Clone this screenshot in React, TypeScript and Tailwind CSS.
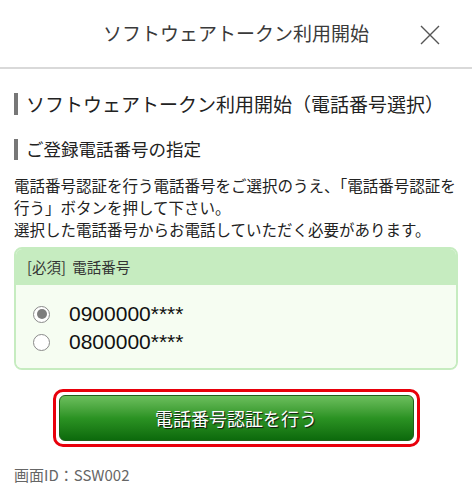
import React from 'react'

const jp = "font-['Noto_Sans_CJK_JP','Noto_Sans',sans-serif]"

function Radio({ checked }: { checked: boolean }) {
  return (
    <span className="flex h-[17px] w-[17px] items-center justify-center rounded-full border border-[#8a8a8a] bg-white">
      {checked && <span className="h-[10px] w-[10px] rounded-full bg-[#7d7d7d]" />}
    </span>
  )
}

export default function App() {
  const phones = [
    { num: '0900000****', checked: true },
    { num: '0800000****', checked: false },
  ]

  return (
    <div className={`min-h-[501px] w-[472px] bg-white text-[#222] ${jp}`}>
      {/* header */}
      <header className="relative flex h-[69px] items-center justify-center border-b-2 border-[#d9d9d9]">
        <h1 className="pb-[1px] text-[19px] leading-[24px] text-[#3a3a3a]">ソフトウェアトークン利用開始</h1>
        <button className="absolute right-[32px] top-[25px]" aria-label="close">
          <svg width="20" height="20" viewBox="0 0 20 20">
            <path d="M1 1L19 19M19 1L1 19" stroke="#555" strokeWidth="1.4" />
          </svg>
        </button>
      </header>

      <main className="px-[14px]">
        <h2 className="mt-[23px] flex items-center gap-[8px] text-[19px] leading-[24px]">
          <span className="h-[22px] w-[4px] bg-[#777]" />
          ソフトウェアトークン利用開始（電話番号選択）
        </h2>

        <h3 className="mt-[21px] flex items-center gap-[8px] text-[17.5px] leading-[24px]">
          <span className="h-[21px] w-[4px] bg-[#777]" />
          ご登録電話番号の指定
        </h3>

        <p className="mt-[13px] text-[15.5px] leading-[22px] text-[#222]">
          電話番号認証を行う電話番号をご選択のうえ、「電話番号認証を
          <br />
          行う」ボタンを押して下さい。
          <br />
          選択した電話番号からお電話していただく必要があります。
        </p>

        <section className="mt-[7px] overflow-hidden rounded-[8px] border-2 border-[#c6ecc0]">
          <div className="flex h-[36px] items-center bg-[#c6ecc0] pl-[11px] text-[14.5px] text-[#333]">
            [必須]&nbsp;&nbsp;電話番号
          </div>
          <div className="flex flex-col bg-[#f6fdf2] pb-[12px] pl-[17px] pt-[15px]">
            {phones.map((p) => (
              <label key={p.num} className="flex h-[28px] items-center gap-[19px]">
                <Radio checked={p.checked} />
                <span className="font-['Liberation_Sans',sans-serif] text-[21px] leading-[28px] text-[#111]">
                  {p.num}
                </span>
              </label>
            ))}
          </div>
        </section>

        <div className="mx-auto mt-[19px] w-[367px] rounded-[10px] border-[3px] border-[#e8000b] bg-white p-[3px]">
          <button className="flex h-[46px] w-full items-center justify-center rounded-[6px] border border-[#1f5f1a] bg-gradient-to-b from-[#6cbf5d] via-[#2b9323] to-[#0c6a0c] text-[18px] text-white [text-shadow:1px_1px_1px_#111]">
            電話番号認証を行う
          </button>
        </div>

        <p className="mt-[18px] text-[15px] leading-[20px] text-[#666]">画面ID：SSW002</p>
      </main>
    </div>
  )
}
